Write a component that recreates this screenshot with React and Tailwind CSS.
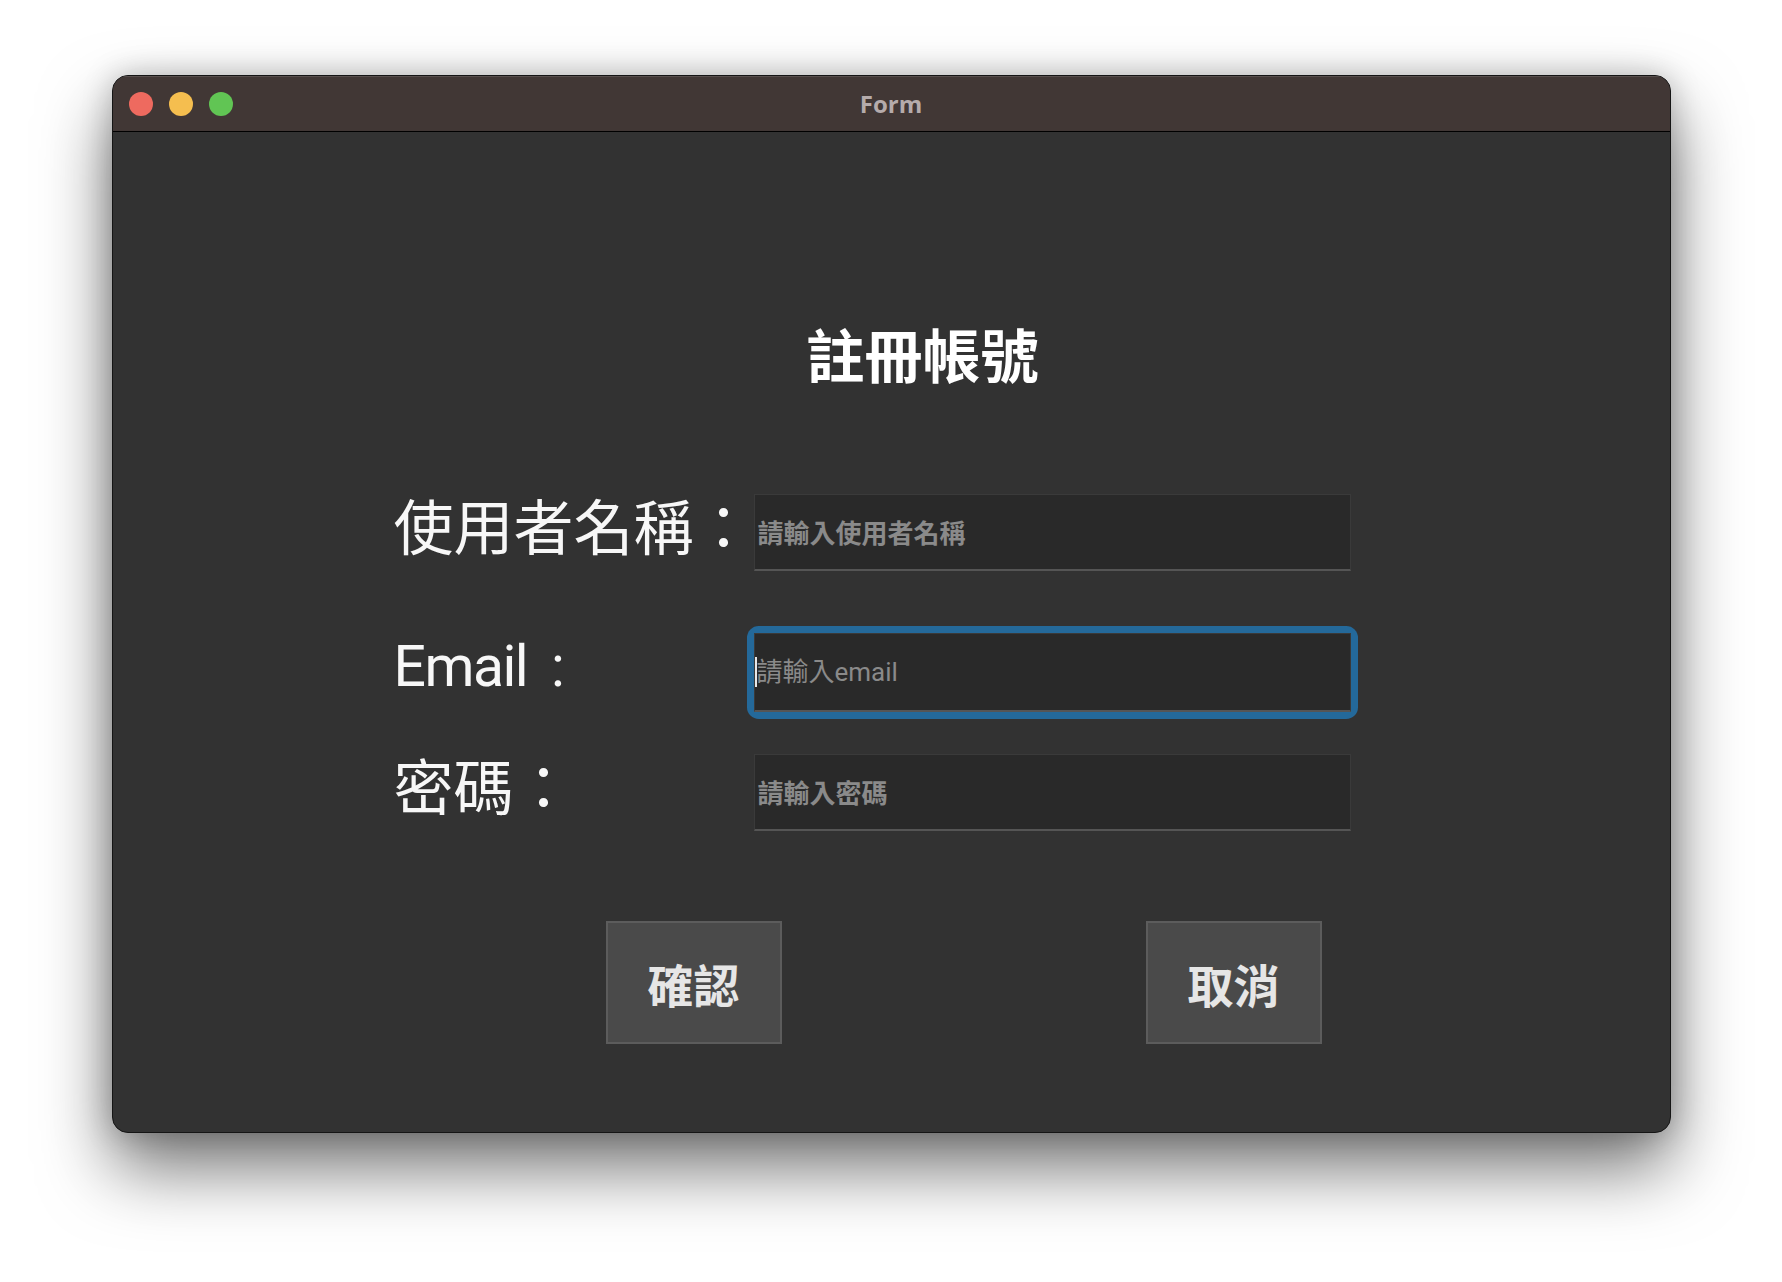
import React from 'react';

const cjk = { fontFamily: '"Noto Sans CJK TC", "Noto Sans", sans-serif' };
const latin = { fontFamily: 'Roboto, "Noto Sans CJK TC", sans-serif' };

function TrafficLights() {
  return (
    <div className="flex items-center gap-[16px] pl-[16px]">
      <span className="block w-[24px] h-[24px] rounded-full bg-[#ee6a5f]" />
      <span className="block w-[24px] h-[24px] rounded-full bg-[#f5be4f]" />
      <span className="block w-[24px] h-[24px] rounded-full bg-[#61c554]" />
    </div>
  );
}

function Field({ placeholder, focused = false, height = 'h-[77px]' }) {
  const box = (
    <div
      className={`w-[597px] ${height} bg-[#292929] border border-[#3a3a3a] border-b-[2px] border-b-[#555555] flex items-center`}
    >
      {focused && <span className="block w-[2px] h-[30px] bg-[#e8e8e8]" />}
      <span
        className={`${focused ? 'font-normal' : 'font-bold pl-[3px]'} text-[26px] text-[#8a8a8a] leading-none whitespace-nowrap`}
        style={focused ? latin : cjk}
      >
        {placeholder}
      </span>
    </div>
  );
  if (!focused) return box;
  return <div className="rounded-[5px] ring-[7px] ring-[#24699a]">{box}</div>;
}

function Row({ label, children, className = '' }) {
  return (
    <div className={`flex items-start ml-[281px] ${className}`}>
      <div className="w-[360px] shrink-0 text-[60px] leading-[60px] text-[#f7f7f7] whitespace-nowrap">
        {label}
      </div>
      {children}
    </div>
  );
}

function Button({ children }) {
  return (
    <button
      className="w-[176px] h-[123px] bg-[#4a4a4a] border-2 border-[#5c5c5c] text-[46px] font-bold text-[#e6e6e6] leading-none flex items-center justify-center"
      style={cjk}
    >
      {children}
    </button>
  );
}

export default function App() {
  return (
    <div className="w-full min-h-[1282px] bg-white pt-[75px]">
      <div className="mx-auto w-[1559px] h-[1058px] rounded-[16px] overflow-hidden border border-[#151515] bg-[#323232] flex flex-col shadow-[0_35px_70px_rgba(0,0,0,0.55),0_0_30px_rgba(0,0,0,0.22)]">
        {/* Title bar */}
        <div className="h-[56px] shrink-0 bg-[#413735] border-b border-black grid grid-cols-[1fr_auto_1fr] items-center shadow-[inset_0_1px_0_rgba(255,255,255,0.12)]">
          <TrafficLights />
          <div className="text-[24px] font-bold text-[#b5abab]" style={{ fontFamily: '"Open Sans", sans-serif' }}>
            Form
          </div>
          <div />
        </div>

        {/* Content */}
        <div className="flex-1 flex flex-col items-start pt-[192px]">
          <h1 className="ml-[694px] text-[58px] leading-[58px] font-bold text-white" style={cjk}>
            註冊帳號
          </h1>

          <Row className="mt-[112px]" label={<span style={cjk}>使用者名稱：</span>}>
            <Field placeholder="請輸入使用者名稱" />
          </Row>

          <Row
            className="mt-[62px]"
            label={
              <span style={latin}>
                <span className="text-[57px] tracking-[-1.5px]">Email</span>
                <span className="text-[57px] ml-[24px]">:</span>
              </span>
            }
          >
            <Field placeholder="請輸入email" focused height="h-[79px]" />
          </Row>

          <Row className="mt-[42px]" label={<span style={cjk}>密碼：</span>}>
            <Field placeholder="請輸入密碼" />
          </Row>

          <div className="flex gap-[364px] ml-[493px] mt-[90px]">
            <Button>確認</Button>
            <Button>取消</Button>
          </div>
        </div>
      </div>
    </div>
  );
}
